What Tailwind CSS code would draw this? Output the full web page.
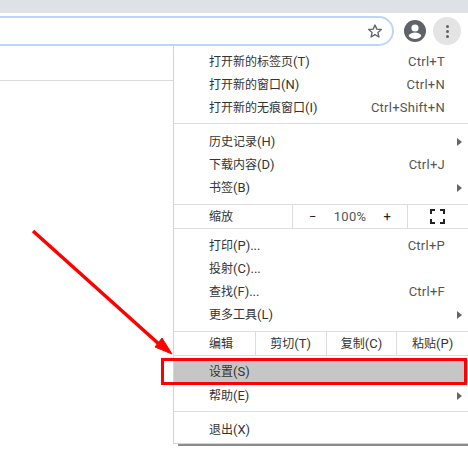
<!DOCTYPE html>
<html lang="zh-CN">
<head>
<meta charset="UTF-8">
<title>Chrome menu</title>
<script src="https://cdn.jsdelivr.net/npm/@tailwindcss/browser@4"></script>
</head>
<body class="bg-white">
<div class="relative w-[468px] h-[454px] overflow-hidden bg-white font-['Roboto','Noto_Sans_CJK_SC',sans-serif] text-[12px] text-[#333]">
  <!-- toolbar -->
  <div class="h-[13px] bg-[#dee1e6]"></div>
  <div class="h-[68px] border-b border-[#dadada] pt-[3px] flex items-start">
    <div class="w-[414px] ml-[-20px] h-[30px] border-2 border-[#bcd7f5] rounded-r-[15px] rounded-l-none flex items-center justify-end pr-[9px] shrink-0">
      <svg width="16" height="16" viewBox="0 0 24 24" fill="none" stroke="#5f6368" stroke-width="2" stroke-linejoin="round"><path d="M12 3l2.700 6.200 6.800.6-5.100 4.500 1.500 6.700L12 17.500 6.100 21l1.500-6.700-5.100-4.500 6.800-.6z"/></svg>
    </div>
    <svg class="ml-[10px] mt-[4px] shrink-0" width="22" height="22" viewBox="0 0 22 22"><circle cx="11" cy="11" r="11" fill="#5f6368"/><circle cx="11" cy="8" r="3.600" fill="#fff"/><path d="M4.600 16c1.400-2.400 4-3.400 6.400-3.400s5 1 6.400 3.400c-1.500 1.800-3.800 3-6.400 3s-4.900-1.200-6.400-3z" fill="#fff"/></svg>
    <div class="ml-[7px] mt-[1px] w-[28px] h-[28px] rounded-full bg-[#e4e4e4] flex flex-col items-center justify-center gap-[2px] shrink-0">
      <span class="w-[3px] h-[3px] rounded-full bg-[#5f6368]"></span>
      <span class="w-[3px] h-[3px] rounded-full bg-[#5f6368]"></span>
      <span class="w-[3px] h-[3px] rounded-full bg-[#5f6368]"></span>
    </div>
  </div>

  <!-- menu -->
  <div class="absolute left-[173px] top-[46px] w-[295px] h-[398px] bg-white border-l border-b border-[#d5d5d5]">
    <div class="pt-[4px]">
      <div class="h-[23px] flex items-center pl-[35px] pr-[23px] justify-between"><span>打开新的标签页<span class="text-[13px]">(T)</span></span><span class="text-[13px] tracking-[0.25px] text-[#555]">Ctrl+T</span></div>
      <div class="h-[23px] flex items-center pl-[35px] pr-[23px] justify-between"><span>打开新的窗口<span class="text-[13px]">(N)</span></span><span class="text-[13px] tracking-[0.25px] text-[#555]">Ctrl+N</span></div>
      <div class="h-[23px] flex items-center pl-[35px] pr-[23px] justify-between"><span>打开新的无痕窗口<span class="text-[13px]">(I)</span></span><span class="text-[13px] tracking-[0.25px] text-[#555]">Ctrl+Shift+N</span></div>
    </div>
    <div class="mt-[4px] h-px bg-[#dcdcdc]"></div>
    <div class="pt-[6px]">
      <div class="h-[23px] flex items-center pl-[35px] pr-[6px] justify-between"><span>历史记录<span class="text-[13px]">(H)</span></span><span class="w-0 h-0 border-y-[4px] border-y-transparent border-l-[5px] border-l-[#666]"></span></div>
      <div class="h-[23px] flex items-center pl-[35px] pr-[23px] justify-between"><span>下载内容<span class="text-[13px]">(D)</span></span><span class="text-[13px] tracking-[0.25px] text-[#555]">Ctrl+J</span></div>
      <div class="h-[23px] flex items-center pl-[35px] pr-[6px] justify-between"><span>书签<span class="text-[13px]">(B)</span></span><span class="w-0 h-0 border-y-[4px] border-y-transparent border-l-[5px] border-l-[#666]"></span></div>
    </div>
    <div class="mt-[5px] h-[25px] border-y border-[#dcdcdc] flex items-center">
      <span class="w-[119px] h-full pl-[35px] pt-[1px] flex items-center border-r border-[#dcdcdc]">缩放</span>
      <div class="w-[115px] h-full flex items-center justify-between pl-[16px] pr-[16px] border-r border-[#dcdcdc] text-[13px]"><span class="text-[#222]">−</span><span class="text-[#555] tracking-[0.25px]">100%</span><span class="text-[#222]">+</span></div>
      <svg class="ml-[22px]" width="15" height="15" viewBox="0 0 15 15" fill="none" stroke="#222" stroke-width="2"><path d="M1 5V1h4M10 1h4v4M14 10v4h-4M5 14H1v-4"/></svg>
    </div>
    <div class="pt-[5px]">
      <div class="h-[23px] flex items-center pl-[35px] pr-[23px] justify-between"><span>打印<span class="text-[13px]">(P)...</span></span><span class="text-[13px] tracking-[0.25px] text-[#555]">Ctrl+P</span></div>
      <div class="h-[23px] flex items-center pl-[35px] pr-[23px] justify-between"><span>投射<span class="text-[13px]">(C)...</span></span></div>
      <div class="h-[23px] flex items-center pl-[35px] pr-[23px] justify-between"><span>查找<span class="text-[13px]">(F)...</span></span><span class="text-[13px] tracking-[0.25px] text-[#555]">Ctrl+F</span></div>
      <div class="h-[23px] flex items-center pl-[35px] pr-[6px] justify-between"><span>更多工具<span class="text-[13px]">(L)</span></span><span class="w-0 h-0 border-y-[4px] border-y-transparent border-l-[5px] border-l-[#666]"></span></div>
    </div>
    <div class="mt-[5px] h-[25px] border-y border-[#dcdcdc] flex items-center">
      <span class="w-[82px] h-full pl-[35px] pt-[1px] flex items-center border-r border-[#dcdcdc]">编辑</span>
      <span class="w-[71px] h-full flex items-center justify-center border-r border-[#dcdcdc]"><span>剪切<span class="text-[13px]">(T)</span></span></span>
      <span class="w-[71px] h-full flex items-center justify-center border-r border-[#dcdcdc]"><span>复制<span class="text-[13px]">(C)</span></span></span>
      <span class="w-[71px] h-full flex items-center justify-center"><span>粘贴<span class="text-[13px]">(P)</span></span></span>
    </div>
    <div class="pt-[4px]">
      <div class="h-[23px] flex items-center pl-[35px] pt-[1px] bg-[#c6c6c6]"><span>设置<span class="text-[13px]">(S)</span></span></div>
      <div class="h-[23px] mt-[1px] flex items-center pl-[35px] pr-[6px] justify-between"><span>帮助<span class="text-[13px]">(E)</span></span><span class="w-0 h-0 border-y-[4px] border-y-transparent border-l-[5px] border-l-[#666]"></span></div>
    </div>
    <div class="mt-[4px] h-px bg-[#dcdcdc]"></div>
    <div class="pt-[6px]">
      <div class="h-[23px] flex items-center pl-[35px]"><span>退出<span class="text-[13px]">(X)</span></span></div>
    </div>
  </div>
  <div class="absolute left-[178px] top-[444px] w-[290px] h-[2px] bg-[#8a8a8a]"></div>

  <!-- annotation -->
  <div class="absolute left-[161px] top-[358px] w-[306px] h-[27px] border-[3px] border-[#f00]"></div>
  <svg class="absolute left-0 top-0" width="468" height="454" viewBox="0 0 468 454" fill="none">
    <path d="M33 231L160 345" stroke="#f00" stroke-width="3.500"/>
    <path d="M172 354L155 347L162 338Z" fill="#f00" stroke="#f00"/>
  </svg>
</div>
</body>
</html>
